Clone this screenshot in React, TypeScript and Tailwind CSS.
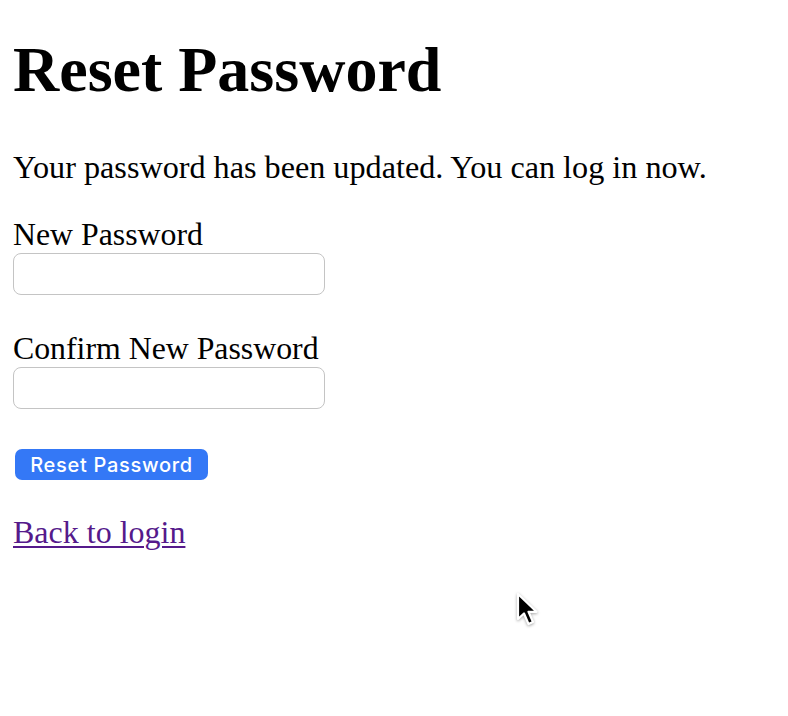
import React from "react";

export default function App() {
  const serif = { fontFamily: '"Liberation Serif", "Times New Roman", serif' };
  return (
    <div className="relative min-h-[716px] w-full bg-white pl-[13px] text-black" style={serif}>
      <h1 className="pt-[33px] text-[64px] font-bold leading-[74px]">Reset Password</h1>
      <p className="mt-[42px] text-[32.2px] leading-[36px]">
        Your password has been updated. You can log in now.
      </p>
      <form className="mt-[32px]" onSubmit={(e) => e.preventDefault()}>
        <label className="block text-[31.8px] leading-[36px]">New Password</label>
        <input
          type="password"
          className="block h-[42px] w-[312px] rounded-[8px] border border-[#c4c4c4] bg-white outline-none"
        />
        <label className="mt-[36px] block text-[31.8px] leading-[36px]">Confirm New Password</label>
        <input
          type="password"
          className="block h-[42px] w-[312px] rounded-[8px] border border-[#c4c4c4] bg-white outline-none"
        />
        <button
          type="submit"
          className="ml-[2px] mt-[40px] flex h-[31px] w-[193px] items-center justify-center rounded-[7px] bg-[#3478f6] text-[20px] font-medium tracking-[0.7px] text-white"
          style={{ fontFamily: 'Inter, "Liberation Sans", sans-serif' }}
        >
          Reset Password
        </button>
      </form>
      <a
        href="#"
        className="mt-[34px] inline-block text-[32px] leading-[36px] text-[#551a8b] underline decoration-[2px] underline-offset-[3px]"
      >
        Back to login
      </a>
      <svg
        className="pointer-events-none absolute left-[514px] top-[591px]"
        width="34"
        height="44"
        viewBox="0 0 34 44"
        style={{ filter: "drop-shadow(0 1px 1.5px rgba(0,0,0,0.35))" }}
      >
        <path
          d="M4 3 L4 28 L10 22.5 L14.5 33 L19 31 L14.5 20.8 L22.5 20.8 Z"
          fill="#000"
          stroke="#fff"
          strokeWidth="2.2"
          strokeLinejoin="round"
        />
      </svg>
    </div>
  );
}
